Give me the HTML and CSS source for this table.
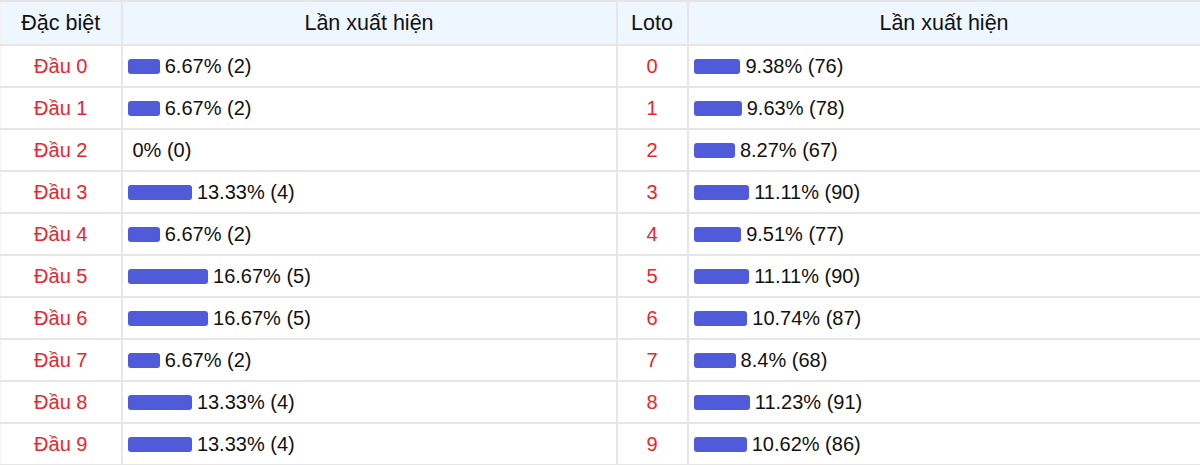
FILE: index.html
```html
<!DOCTYPE html>
<html lang="vi">
<head>
<meta charset="utf-8">
<link rel="stylesheet" href="styles.css">
</head>
<body>
<table class="stats">
  <colgroup>
    <col class="c1"><col class="c2"><col class="c3"><col class="c4">
  </colgroup>
  <thead>
    <tr><th>Đặc biệt</th><th>Lần xuất hiện</th><th>Loto</th><th>Lần xuất hiện</th></tr>
  </thead>
  <tbody>
    <tr><td class="lbl">Đầu 0</td><td class="val"><span class="bar" style="width:6.67%"></span>6.67% (2)</td><td class="lbl">0</td><td class="val"><span class="bar" style="width:9.38%"></span>9.38% (76)</td></tr>
    <tr><td class="lbl">Đầu 1</td><td class="val"><span class="bar" style="width:6.67%"></span>6.67% (2)</td><td class="lbl">1</td><td class="val"><span class="bar" style="width:9.63%"></span>9.63% (78)</td></tr>
    <tr><td class="lbl">Đầu 2</td><td class="val"><span class="bar" style="width:0%"></span>0% (0)</td><td class="lbl">2</td><td class="val"><span class="bar" style="width:8.27%"></span>8.27% (67)</td></tr>
    <tr><td class="lbl">Đầu 3</td><td class="val"><span class="bar" style="width:13.33%"></span>13.33% (4)</td><td class="lbl">3</td><td class="val"><span class="bar" style="width:11.11%"></span>11.11% (90)</td></tr>
    <tr><td class="lbl">Đầu 4</td><td class="val"><span class="bar" style="width:6.67%"></span>6.67% (2)</td><td class="lbl">4</td><td class="val"><span class="bar" style="width:9.51%"></span>9.51% (77)</td></tr>
    <tr><td class="lbl">Đầu 5</td><td class="val"><span class="bar" style="width:16.67%"></span>16.67% (5)</td><td class="lbl">5</td><td class="val"><span class="bar" style="width:11.11%"></span>11.11% (90)</td></tr>
    <tr><td class="lbl">Đầu 6</td><td class="val"><span class="bar" style="width:16.67%"></span>16.67% (5)</td><td class="lbl">6</td><td class="val"><span class="bar" style="width:10.74%"></span>10.74% (87)</td></tr>
    <tr><td class="lbl">Đầu 7</td><td class="val"><span class="bar" style="width:6.67%"></span>6.67% (2)</td><td class="lbl">7</td><td class="val"><span class="bar" style="width:8.4%"></span>8.4% (68)</td></tr>
    <tr><td class="lbl">Đầu 8</td><td class="val"><span class="bar" style="width:13.33%"></span>13.33% (4)</td><td class="lbl">8</td><td class="val"><span class="bar" style="width:11.23%"></span>11.23% (91)</td></tr>
    <tr><td class="lbl">Đầu 9</td><td class="val"><span class="bar" style="width:13.33%"></span>13.33% (4)</td><td class="lbl">9</td><td class="val"><span class="bar" style="width:10.62%"></span>10.62% (86)</td></tr>
  </tbody>
</table>
</body>
</html>
```
FILE: styles.css
```css
html, body {
  margin: 0;
  padding: 0;
  background: #fff;
}
body {
  font-family: "Liberation Sans", Arial, sans-serif;
  font-size: 20px;
  color: #111;
}
.stats {
  width: 1200px;
  border-collapse: collapse;
  table-layout: fixed;
}
.c1 { width: 121px; }
.c2 { width: 495px; }
.c3 { width: 71px; }
.c4 { width: 513px; }
.stats th,
.stats td {
  border: 2px solid #e6e6e6;
  padding: 0 5px;
  line-height: 22px;
}
.stats th {
  background: #eef6ff;
  font-weight: normal;
  font-size: 21.5px;
  text-align: center;
  height: 42px;
  color: #111;
}
.stats td {
  height: 40px;
}
.stats tr > :first-child { border-left-width: 1px; border-left-color: #f2f2f2; }
.lbl {
  text-align: center;
  color: #e8262f;
}
.val {
  text-align: left;
  white-space: nowrap;
}
.bar {
  display: inline-block;
  height: 15px;
  background: #4f5bd8;
  border-radius: 3px;
  vertical-align: -1px;
  margin-right: 5px;
}
```
